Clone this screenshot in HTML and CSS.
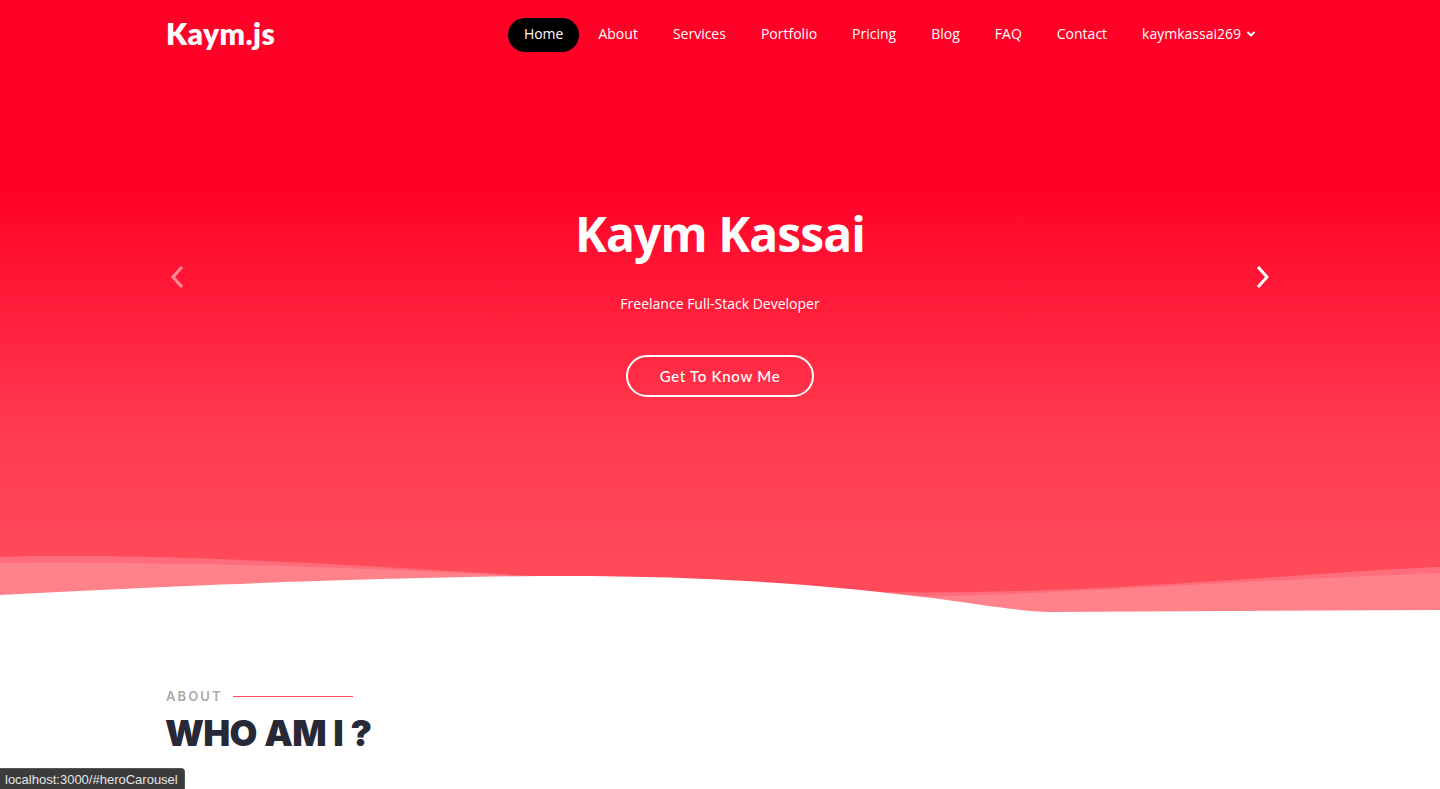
FILE: index.html
```html
<!DOCTYPE html>
<html lang="en">
<head>
<meta charset="utf-8">
<title>Kaym.js</title>
<link rel="stylesheet" href="styles.css">
</head>
<body>
<section class="hero" id="hero">
  <header class="header">
    <div class="container header-inner">
      <a class="logo" href="#">Kaym.js</a>
      <nav class="nav">
        <a class="nav-link active" href="#">Home</a>
        <a class="nav-link" href="#">About</a>
        <a class="nav-link" href="#">Services</a>
        <a class="nav-link" href="#">Portfolio</a>
        <a class="nav-link" href="#">Pricing</a>
        <a class="nav-link" href="#">Blog</a>
        <a class="nav-link" href="#">FAQ</a>
        <a class="nav-link" href="#">Contact</a>
        <a class="nav-link dropdown" href="#">kaymkassai269
          <svg class="chev" width="10" height="10" viewBox="0 0 10 10"><path d="M2 3.5 L5 6.5 L8 3.5" fill="none" stroke="#fff" stroke-width="2" stroke-linecap="round" stroke-linejoin="round"/></svg>
        </a>
      </nav>
    </div>
  </header>
  <div class="container carousel">
    <a class="arrow arrow-prev" href="#heroCarousel" aria-label="Previous">
      <svg width="14" height="24" viewBox="0 0 14 24"><path d="M11 3 L3 12 L11 21" fill="none" stroke="#fff" stroke-width="3" stroke-linecap="square"/></svg>
    </a>
    <div class="slide">
      <h1 class="hero-title">Kaym Kassai</h1>
      <p class="hero-sub">Freelance Full-Stack Developer</p>
      <a class="btn-outline" href="#about">Get To Know Me</a>
    </div>
    <a class="arrow arrow-next" href="#heroCarousel" aria-label="Next">
      <svg width="14" height="24" viewBox="0 0 14 24"><path d="M3 3 L11 12 L3 21" fill="none" stroke="#fff" stroke-width="3" stroke-linecap="square"/></svg>
    </a>
  </div>
  <svg class="waves" viewBox="0 0 1440 70" preserveAspectRatio="none" width="1440" height="70">
    <path d="M0,15 C60,12 200,14 400,26 C560,36 680,42 760,45 C880,52 960,52 1100,46 C1250,38 1360,28 1440,25 L1440,70 L0,70 Z" fill="#ff6c7a"/>
    <path d="M0,21 C120,20 300,22 500,33 C640,41 760,50 880,54 C1000,57 1200,40 1440,31 L1440,70 L0,70 Z" fill="#ff8189"/>
    <path d="M0,53 C150,45 350,36 540,34 C700,33 820,42 940,57 C990,64 1020,69 1050,70 L1440,68 L1440,70 L0,70 Z" fill="#ffffff"/>
  </svg>
</section>

<section class="about" id="about">
  <div class="container">
    <div class="section-label"><span>About</span><i class="label-line"></i></div>
    <h2 class="section-title">WHO AM I ?</h2>
  </div>
</section>

<div class="status">localhost:3000/#heroCarousel</div>
</body>
</html>
```

FILE: styles.css
```css
* { box-sizing: border-box; }
html, body { margin: 0; padding: 0; }
body {
  font-family: "Open Sans", "Liberation Sans", sans-serif;
  background: #fff;
  color: #2b2d3a;
  overflow: hidden;
  height: 789px;
}
a { text-decoration: none; color: inherit; }

.container {
  width: 1110px;
  margin: 0 auto;
}

.hero {
  position: relative;
  height: 612px;
  background: linear-gradient(180deg, #ff0026 0%, #ff0026 30%, #ff3a4e 70%, #ff4a5a 92%);
  color: #fff;
}

.header-inner {
  height: 70px;
  display: flex;
  align-items: center;
  justify-content: space-between;
}
.logo {
  font-family: "Lato", "Open Sans", sans-serif;
  font-weight: 800;
  font-size: 30px;
  letter-spacing: 0.4px;
  color: #fff;
  margin-left: 1px;
  margin-top: -4px;
}
.nav {
  display: flex;
  align-items: center;
  gap: 3px;
  margin-right: 19px;
}
.nav-link {
  font-size: 14px;
  color: #fff;
  padding: 0 16px 3px;
  height: 34px;
  display: flex;
  align-items: center;
  border-radius: 20px;
  white-space: nowrap;
}
.nav-link.active { background: #000; }
.nav-link.dropdown { padding-right: 0; gap: 2px; }
.chev { margin-left: 3px; margin-top: 1px; }

.carousel {
  display: flex;
  align-items: flex-start;
  justify-content: space-between;
  padding-top: 136px;
}
.arrow {
  display: flex;
  flex: 0 0 24px;
  width: 24px;
  height: 30px;
  align-items: center;
  justify-content: center;
  margin-top: 56px;
}
.arrow-prev { opacity: 0.5; }
.slide {
  flex: 1;
  display: flex;
  flex-direction: column;
  align-items: center;
  text-align: center;
}
.hero-title {
  font-family: "Open Sans", sans-serif;
  font-weight: 700;
  font-size: 48px;
  line-height: 56px;
  margin: 0;
  letter-spacing: -0.9px;
}
.hero-sub {
  font-size: 14px;
  margin: 32px 0 0;
  line-height: 20px;
}
.btn-outline {
  margin-top: 41px;
  font-family: "Lato", sans-serif;
  font-weight: 500;
  font-size: 15px;
  letter-spacing: 0.7px;
  border: 2px solid #fff;
  border-radius: 50px;
  width: 188px;
  height: 42px;
  display: flex;
  align-items: center;
  justify-content: center;
}

.waves {
  position: absolute;
  left: 0;
  bottom: 0;
  display: block;
}

.about { padding-top: 76px; }
.section-label {
  display: flex;
  align-items: center;
  gap: 10px;
  font-family: "Inter", sans-serif;
  font-weight: 600;
  font-size: 13px;
  letter-spacing: 2.1px;
  color: #aaaaaa;
  text-transform: uppercase;
  margin-left: 1px;
}
.label-line {
  display: block;
  width: 120px;
  height: 1px;
  background: #ff4a5a;
}
.section-title {
  font-family: "Inter", sans-serif;
  font-weight: 900;
  font-size: 36px;
  letter-spacing: -0.7px;
  word-spacing: 1px;
  line-height: 46px;
  margin: 6px 0 0;
  color: #272936;
}

.status {
  position: fixed;
  left: 0;
  bottom: 0;
  height: 21px;
  padding: 0 6px 0 5px;
  background: #3a3b3d;
  color: #e6e6e6;
  font-family: "Liberation Sans", Arial, sans-serif;
  font-size: 13px;
  line-height: 21px;
  border-top-right-radius: 4px;
  border: 1px solid #555;
  border-left: none;
  border-bottom: none;
}
```
